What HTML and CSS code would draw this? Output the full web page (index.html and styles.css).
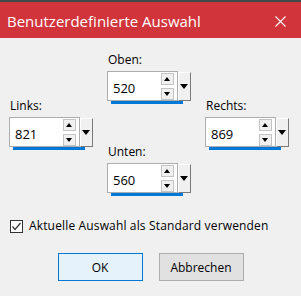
FILE: index.html
```html
<!DOCTYPE html>
<html lang="de">
<head>
  <meta charset="UTF-8">
  <title>Benutzerdefinierte Auswahl</title>
  <link rel="stylesheet" href="styles.css">
</head>
<body>
  <div class="titlebar">
    <span class="title">Benutzerdefinierte Auswahl</span>
    <svg class="close" width="11" height="11" viewBox="0 0 11 11">
      <path d="M0.5 0.5 L10.5 10.5 M10.5 0.5 L0.5 10.5" stroke="#fff" stroke-width="1.1" fill="none"/>
    </svg>
  </div>

  <div class="content">
    <div class="fields">
      <div class="col side">
        <div class="block">
          <div class="label">Links:</div>
          <div class="spinner">
            <div class="field">
              <span class="value">821</span>
              <div class="arrows">
                <div class="arrow up"></div>
                <div class="arrow down"></div>
              </div>
            </div>
            <div class="drop"></div>
            <div class="bar"></div>
          </div>
        </div>
      </div>

      <div class="col middle">
        <div class="block">
          <div class="label">Oben:</div>
          <div class="spinner">
            <div class="field">
              <span class="value">520</span>
              <div class="arrows">
                <div class="arrow up"></div>
                <div class="arrow down"></div>
              </div>
            </div>
            <div class="drop"></div>
            <div class="bar"></div>
          </div>
        </div>
        <div class="block">
          <div class="label">Unten:</div>
          <div class="spinner">
            <div class="field">
              <span class="value">560</span>
              <div class="arrows">
                <div class="arrow up"></div>
                <div class="arrow down"></div>
              </div>
            </div>
            <div class="drop"></div>
            <div class="bar"></div>
          </div>
        </div>
      </div>

      <div class="col side">
        <div class="block">
          <div class="label">Rechts:</div>
          <div class="spinner">
            <div class="field">
              <span class="value">869</span>
              <div class="arrows">
                <div class="arrow up"></div>
                <div class="arrow down"></div>
              </div>
            </div>
            <div class="drop"></div>
            <div class="bar"></div>
          </div>
        </div>
      </div>
    </div>

    <label class="check">
      <span class="box">
        <svg width="11" height="11" viewBox="0 0 11 11">
          <path d="M1.5 5.5 L4 8.5 L9.5 2" stroke="#333" stroke-width="1.2" fill="none"/>
        </svg>
      </span>
      Aktuelle Auswahl als Standard verwenden
    </label>

    <div class="actions">
      <button class="btn primary">OK</button>
      <button class="btn">Abbrechen</button>
    </div>
  </div>
</body>
</html>
```

FILE: styles.css
```css
body {
  margin: 0;
  background-color: #f0f0f0;
  font-family: "Open Sans", "Noto Sans", sans-serif;
  color: #000;
}

.titlebar {
  height: 36px;
  border-top: 2px solid #3f4b4b;
  background-color: #d1343a;
  color: #fff;
  display: flex;
  align-items: center;
  justify-content: space-between;
  padding: 0 15px 0 7px;
  font-size: 15px;
}

.title {
  margin-top: 2px;
}

.close {
  margin-top: 3px;
}

.content {
  padding-top: 14px;
}

.fields {
  display: flex;
  padding-left: 9px;
  gap: 14px;
}

.col {
  width: 84px;
  display: flex;
  flex-direction: column;
}

.side {
  justify-content: center;
}

.middle {
  gap: 40px;
}

.label {
  font-size: 12px;
  line-height: 16px;
  padding-left: 1px;
  margin-bottom: 3px;
}

.spinner {
  display: grid;
  grid-template-columns: 71px 13px;
  grid-template-rows: 30px 3px;
}

.field {
  background-color: #fff;
  border: 1px solid #adadad;
  display: flex;
  align-items: center;
  justify-content: space-between;
  padding: 0 3px 0 5px;
}

.value {
  font-size: 13px;
  margin-top: 4px;
}

.arrows {
  display: flex;
  flex-direction: column;
  gap: 3px;
  margin-top: 1px;
}

.arrow {
  width: 11px;
  height: 10px;
  border: 1px solid #c4c4c4;
  background-color: #f0f0f0;
  position: relative;
}

.arrow::after {
  content: "";
  position: absolute;
  left: 2px;
  border-left: 3.5px solid transparent;
  border-right: 3.5px solid transparent;
}

.up::after {
  top: 3px;
  border-bottom: 4px solid #000;
}

.down::after {
  top: 3px;
  border-top: 4px solid #000;
}

.drop {
  margin-top: 1px;
  background-color: #f0f0f0;
  border-top: 1px solid #fff;
  border-left: 1px solid #fff;
  border-right: 1px solid #7a7a7a;
  border-bottom: 1px solid #7a7a7a;
  position: relative;
}

.drop::after {
  content: "";
  position: absolute;
  left: 1px;
  top: 11px;
  border-left: 4.5px solid transparent;
  border-right: 4.5px solid transparent;
  border-top: 5px solid #000;
}

.bar {
  grid-column: 1 / 3;
  margin-left: 4px;
  width: 72px;
  background-color: #0078d7;
}

.check {
  display: flex;
  align-items: center;
  gap: 6px;
  margin: 22px 0 0 10px;
  font-size: 12px;
  line-height: 16px;
  letter-spacing: 0.15px;
}

.box {
  width: 11px;
  height: 11px;
  border: 1px solid #333;
  background-color: #fff;
  display: flex;
}

.actions {
  display: flex;
  justify-content: center;
  gap: 16px;
  margin-top: 19px;
}

.btn {
  width: 85px;
  height: 28px;
  font-family: inherit;
  font-size: 12px;
  background-color: #e1e1e1;
  border: 1px solid #adadad;
  padding: 0;
}

.primary {
  background-color: #e5f1fb;
  border-color: #0078d7;
}
```
